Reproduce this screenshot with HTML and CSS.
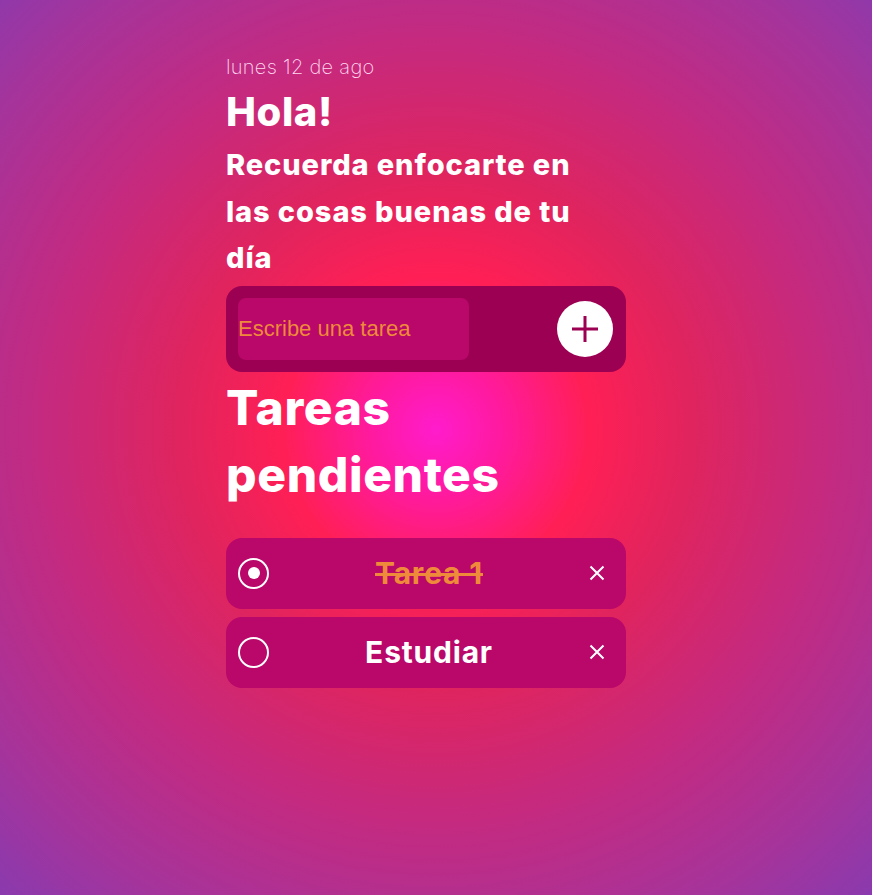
FILE: index.html
```html
<!DOCTYPE html>
<html lang="es">
<head>
<meta charset="utf-8">
<title>Tareas</title>
<link rel="stylesheet" href="styles.css">
</head>
<body>
<main class="app">
  <p class="date">lunes 12 de ago</p>
  <h1 class="hello">Hola!</h1>
  <h2 class="subtitle">Recuerda enfocarte en las cosas buenas de tu día</h2>
  <form class="new-task">
    <input class="task-input" type="text" placeholder="Escribe una tarea">
    <button class="add-btn" type="button" aria-label="Agregar">
      <svg width="28" height="28" viewBox="0 0 28 28"><path d="M14 1v26M1 14h26" stroke="#9c0052" stroke-width="3" fill="none"/></svg>
    </button>
  </form>
  <h2 class="list-title">Tareas pendientes</h2>
  <ul class="tasks">
    <li class="task done">
      <span class="check checked"></span>
      <span class="task-text">Tarea 1</span>
      <svg class="remove" width="16" height="16" viewBox="0 0 16 16"><path d="M1.5 1.5l13 13M14.5 1.5l-13 13" stroke="#fff" stroke-width="2" fill="none"/></svg>
    </li>
    <li class="task">
      <span class="check"></span>
      <span class="task-text">Estudiar</span>
      <svg class="remove" width="16" height="16" viewBox="0 0 16 16"><path d="M1.5 1.5l13 13M14.5 1.5l-13 13" stroke="#fff" stroke-width="2" fill="none"/></svg>
    </li>
  </ul>
</main>
</body>
</html>
```
FILE: styles.css
```css
html, body {
  margin: 0;
  padding: 0;
  height: 100%;
}
body {
  min-height: 895px;
  background: radial-gradient(circle at 50% 48%, #ff1ccc 0%, #ff1aa0 10%, #ff1f55 24%, #e0245e 40%, #c42a80 62%, #a4349c 85%, #8a3aae 100%);
  font-family: "Inter", "Noto Sans", sans-serif;
  color: #fff;
}
.app {
  width: 400px;
  margin-left: calc(50% - 210px);
  padding-top: 54px;
  box-sizing: border-box;
}
.date {
  margin: 0;
  font-size: 20px;
  font-weight: 200;
  line-height: 26px;
  letter-spacing: 0.3px;
  color: #ffd8f0;
}
.hello {
  margin: 8px 0 0;
  font-size: 40px;
  font-weight: 800;
  line-height: 48px;
  letter-spacing: 0.6px;
}
.subtitle {
  margin: 6px 0 0;
  width: 372px;
  font-size: 29px;
  font-weight: 800;
  line-height: 46.5px;
  letter-spacing: 0.9px;
}
.new-task {
  margin-top: 4px;
  height: 86px;
  background: #9c0052;
  border-radius: 16px;
  display: flex;
  align-items: center;
  justify-content: space-between;
  padding: 0 13px 0 12px;
  box-sizing: border-box;
}
.task-input {
  width: 231px;
  height: 62px;
  border: none;
  border-radius: 8px;
  background: #b9076a;
  padding: 0;
  font-family: "Liberation Sans", Arial, sans-serif;
  font-size: 22px;
  color: #ee8a3a;
  outline: none;
}
.task-input::placeholder {
  color: #ee8a3a;
  opacity: 1;
}
.add-btn {
  width: 56px;
  height: 56px;
  border-radius: 50%;
  border: none;
  background: #fff;
  display: flex;
  align-items: center;
  justify-content: center;
  padding: 0;
}
.list-title {
  margin: 2px 0 0;
  font-size: 48px;
  font-weight: 800;
  line-height: 67px;
  letter-spacing: 0.6px;
}
.tasks {
  list-style: none;
  margin: 30px 0 0;
  padding: 0;
  display: flex;
  flex-direction: column;
  gap: 8px;
}
.task {
  height: 71px;
  background: #b9076a;
  border-radius: 16px;
  display: flex;
  align-items: center;
  padding: 0 21px 0 12px;
  box-sizing: border-box;
}
.check {
  width: 31px;
  height: 31px;
  border: 2px solid #fff;
  border-radius: 50%;
  box-sizing: border-box;
  display: flex;
  align-items: center;
  justify-content: center;
  flex: none;
}
.check.checked::after {
  content: "";
  width: 12px;
  height: 12px;
  border-radius: 50%;
  background: #fff;
}
.task-text {
  flex: 1;
  text-align: center;
  font-size: 30px;
  font-weight: 700;
  letter-spacing: 0.8px;
}
.done .task-text {
  color: #ee8a3a;
  text-decoration: line-through;
  text-decoration-thickness: 3px;
}
.remove {
  flex: none;
}
```
